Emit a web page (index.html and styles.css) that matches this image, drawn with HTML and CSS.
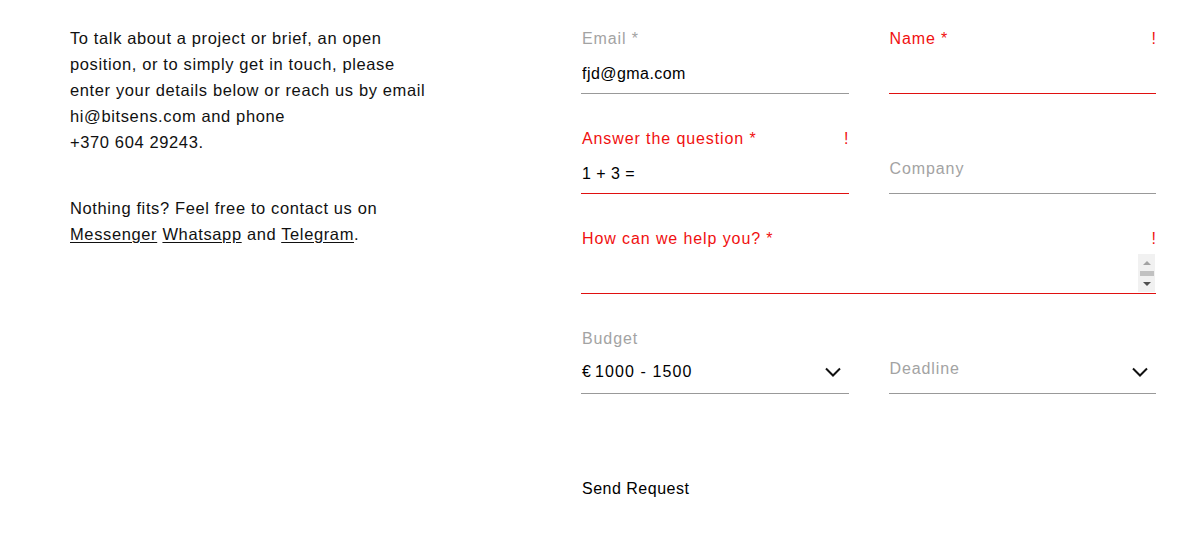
FILE: index.html
```html
<!DOCTYPE html>
<html lang="en">
<head>
<meta charset="utf-8">
<title>Contact</title>
<link rel="stylesheet" href="styles.css">
</head>
<body>
<div class="page">
  <div class="intro">
    <p>To talk about a project or brief, an open position, or to simply get in touch, please enter your details below or reach us by email hi@bitsens.com and phone<br>+370 604 29243.</p>
    <p>Nothing fits? Feel free to contact us on <a href="#">Messenger</a> <a href="#">Whatsapp</a> and <a href="#">Telegram</a>.</p>
  </div>
  <form class="form">
    <div class="grid">
      <div class="field">
        <div class="label-row"><label class="label">Email *</label></div>
        <input class="input" type="text" value="fjd@gma.com">
      </div>
      <div class="field error">
        <div class="label-row"><label class="label">Name *</label><span class="bang">!</span></div>
        <input class="input" type="text" value="">
      </div>
      <div class="field error">
        <div class="label-row"><label class="label">Answer the question *</label><span class="bang">!</span></div>
        <input class="input" type="text" value="1 + 3 =">
      </div>
      <div class="field">
        <div class="label-row"></div>
        <input class="input" type="text" value="">
        <label class="float">Company</label>
      </div>
      <div class="field error wide">
        <div class="label-row"><label class="label">How can we help you? *</label><span class="bang">!</span></div>
        <div class="ta-wrap">
          <textarea class="textarea" rows="2"></textarea>
          <div class="scrollbar" aria-hidden="true">
            <span class="arrow-up"></span>
            <span class="thumb"></span>
            <span class="arrow-down"></span>
          </div>
        </div>
      </div>
      <div class="field">
        <div class="label-row"><label class="label">Budget</label></div>
        <div class="select">
          <span class="select-value">€<span class="euro-gap"></span>1000 - 1500</span>
          <svg class="chev" width="16" height="10" viewBox="0 0 16 10"><path d="M1 1.5 L8 8.5 L15 1.5" fill="none" stroke="#111" stroke-width="2"/></svg>
        </div>
      </div>
      <div class="field">
        <div class="label-row"></div>
        <div class="select">
          <span class="select-value placeholder">Deadline</span>
          <svg class="chev" width="16" height="10" viewBox="0 0 16 10"><path d="M1 1.5 L8 8.5 L15 1.5" fill="none" stroke="#111" stroke-width="2"/></svg>
        </div>
      </div>
    </div>
    <button class="send" type="button">Send Request</button>
  </form>
</div>
</body>
</html>
```

FILE: styles.css
```css
* { box-sizing: border-box; }
body {
  margin: 0;
  background: #fff;
  font-family: "Liberation Sans", Arial, sans-serif;
  color: #111;
}
.page {
  display: flex;
  padding: 25px 0 0 70px;
}
.intro {
  width: 362px;
  font-size: 16.5px;
  line-height: 26px;
  letter-spacing: 0.62px;
}
.intro p { margin: 0 0 40px 0; }
.intro a { color: #111; text-decoration: underline; text-underline-offset: 2px; }
.form {
  margin-left: 149px;
  width: 575px;
  padding-top: 4px;
}
.grid {
  display: grid;
  grid-template-columns: 1fr 1fr;
  column-gap: 40px;
}
.field {
  position: relative;
  height: 100px;
}
.wide { grid-column: 1 / 3; }
.label-row {
  display: flex;
  justify-content: space-between;
  height: 20px;
  font-size: 16px;
  line-height: 20px;
  padding-left: 1px;
  letter-spacing: 0.9px;
}
.label { color: #a3a3a3; }
.bang { color: #f01010; letter-spacing: 0; }
.error .label { color: #f01010; }
.input {
  display: block;
  width: 100%;
  height: 45px;
  border: 0;
  border-bottom: 1px solid #999;
  padding: 15px 1px 9px;
  font: 16px/20px "Liberation Sans", Arial, sans-serif;
  letter-spacing: 0.45px;
  color: #000;
  background: transparent;
  outline: none;
}
.error .input, .error .textarea { border-bottom-color: #e01010; }
.float {
  position: absolute;
  left: 1px;
  top: 30px;
  font-size: 16px;
  line-height: 20px;
  color: #a3a3a3;
  letter-spacing: 0.9px;
}
.ta-wrap {
  position: relative;
  height: 40px;
  margin-top: 5px;
}
.textarea {
  display: block;
  width: 100%;
  height: 40px;
  margin: 0;
  border: 0;
  border-bottom: 1px solid #999;
  padding: 5px 20px 0 1px;
  font: 16px/20px "Liberation Sans", Arial, sans-serif;
  resize: none;
  overflow: hidden;
  outline: none;
}
.scrollbar {
  position: absolute;
  top: 0;
  right: 1px;
  width: 17px;
  height: 38px;
  background: #f1f1f1;
  display: flex;
  flex-direction: column;
  align-items: center;
  padding-top: 7px;
}
.arrow-up {
  width: 0;
  height: 0;
  border-left: 4px solid transparent;
  border-right: 4px solid transparent;
  border-bottom: 4px solid #a3a3a3;
}
.thumb {
  width: 14px;
  height: 5px;
  margin: 6px 0 0 1px;
  background: #c1c1c1;
}
.arrow-down {
  width: 0;
  height: 0;
  margin-top: 6px;
  border-left: 4px solid transparent;
  border-right: 4px solid transparent;
  border-top: 4px solid #505050;
}
.select {
  display: flex;
  align-items: center;
  justify-content: space-between;
  height: 45px;
  padding: 1px 8px 0 1px;
  border-bottom: 1px solid #999;
}
.select-value {
  font-size: 16px;
  line-height: 20px;
  color: #000;
  letter-spacing: 1.1px;
}
.euro-gap { display: inline-block; width: 3px; }
.select-value.placeholder {
  color: #a3a3a3;
  position: relative;
  top: -3px;
  letter-spacing: 0.9px;
}
.chev { display: block; }
.send {
  margin-top: 50px;
  padding: 0 1px;
  border: 0;
  background: none;
  font: 16px/20px "Liberation Sans", Arial, sans-serif;
  letter-spacing: 0.5px;
  color: #000;
  cursor: pointer;
}
```
